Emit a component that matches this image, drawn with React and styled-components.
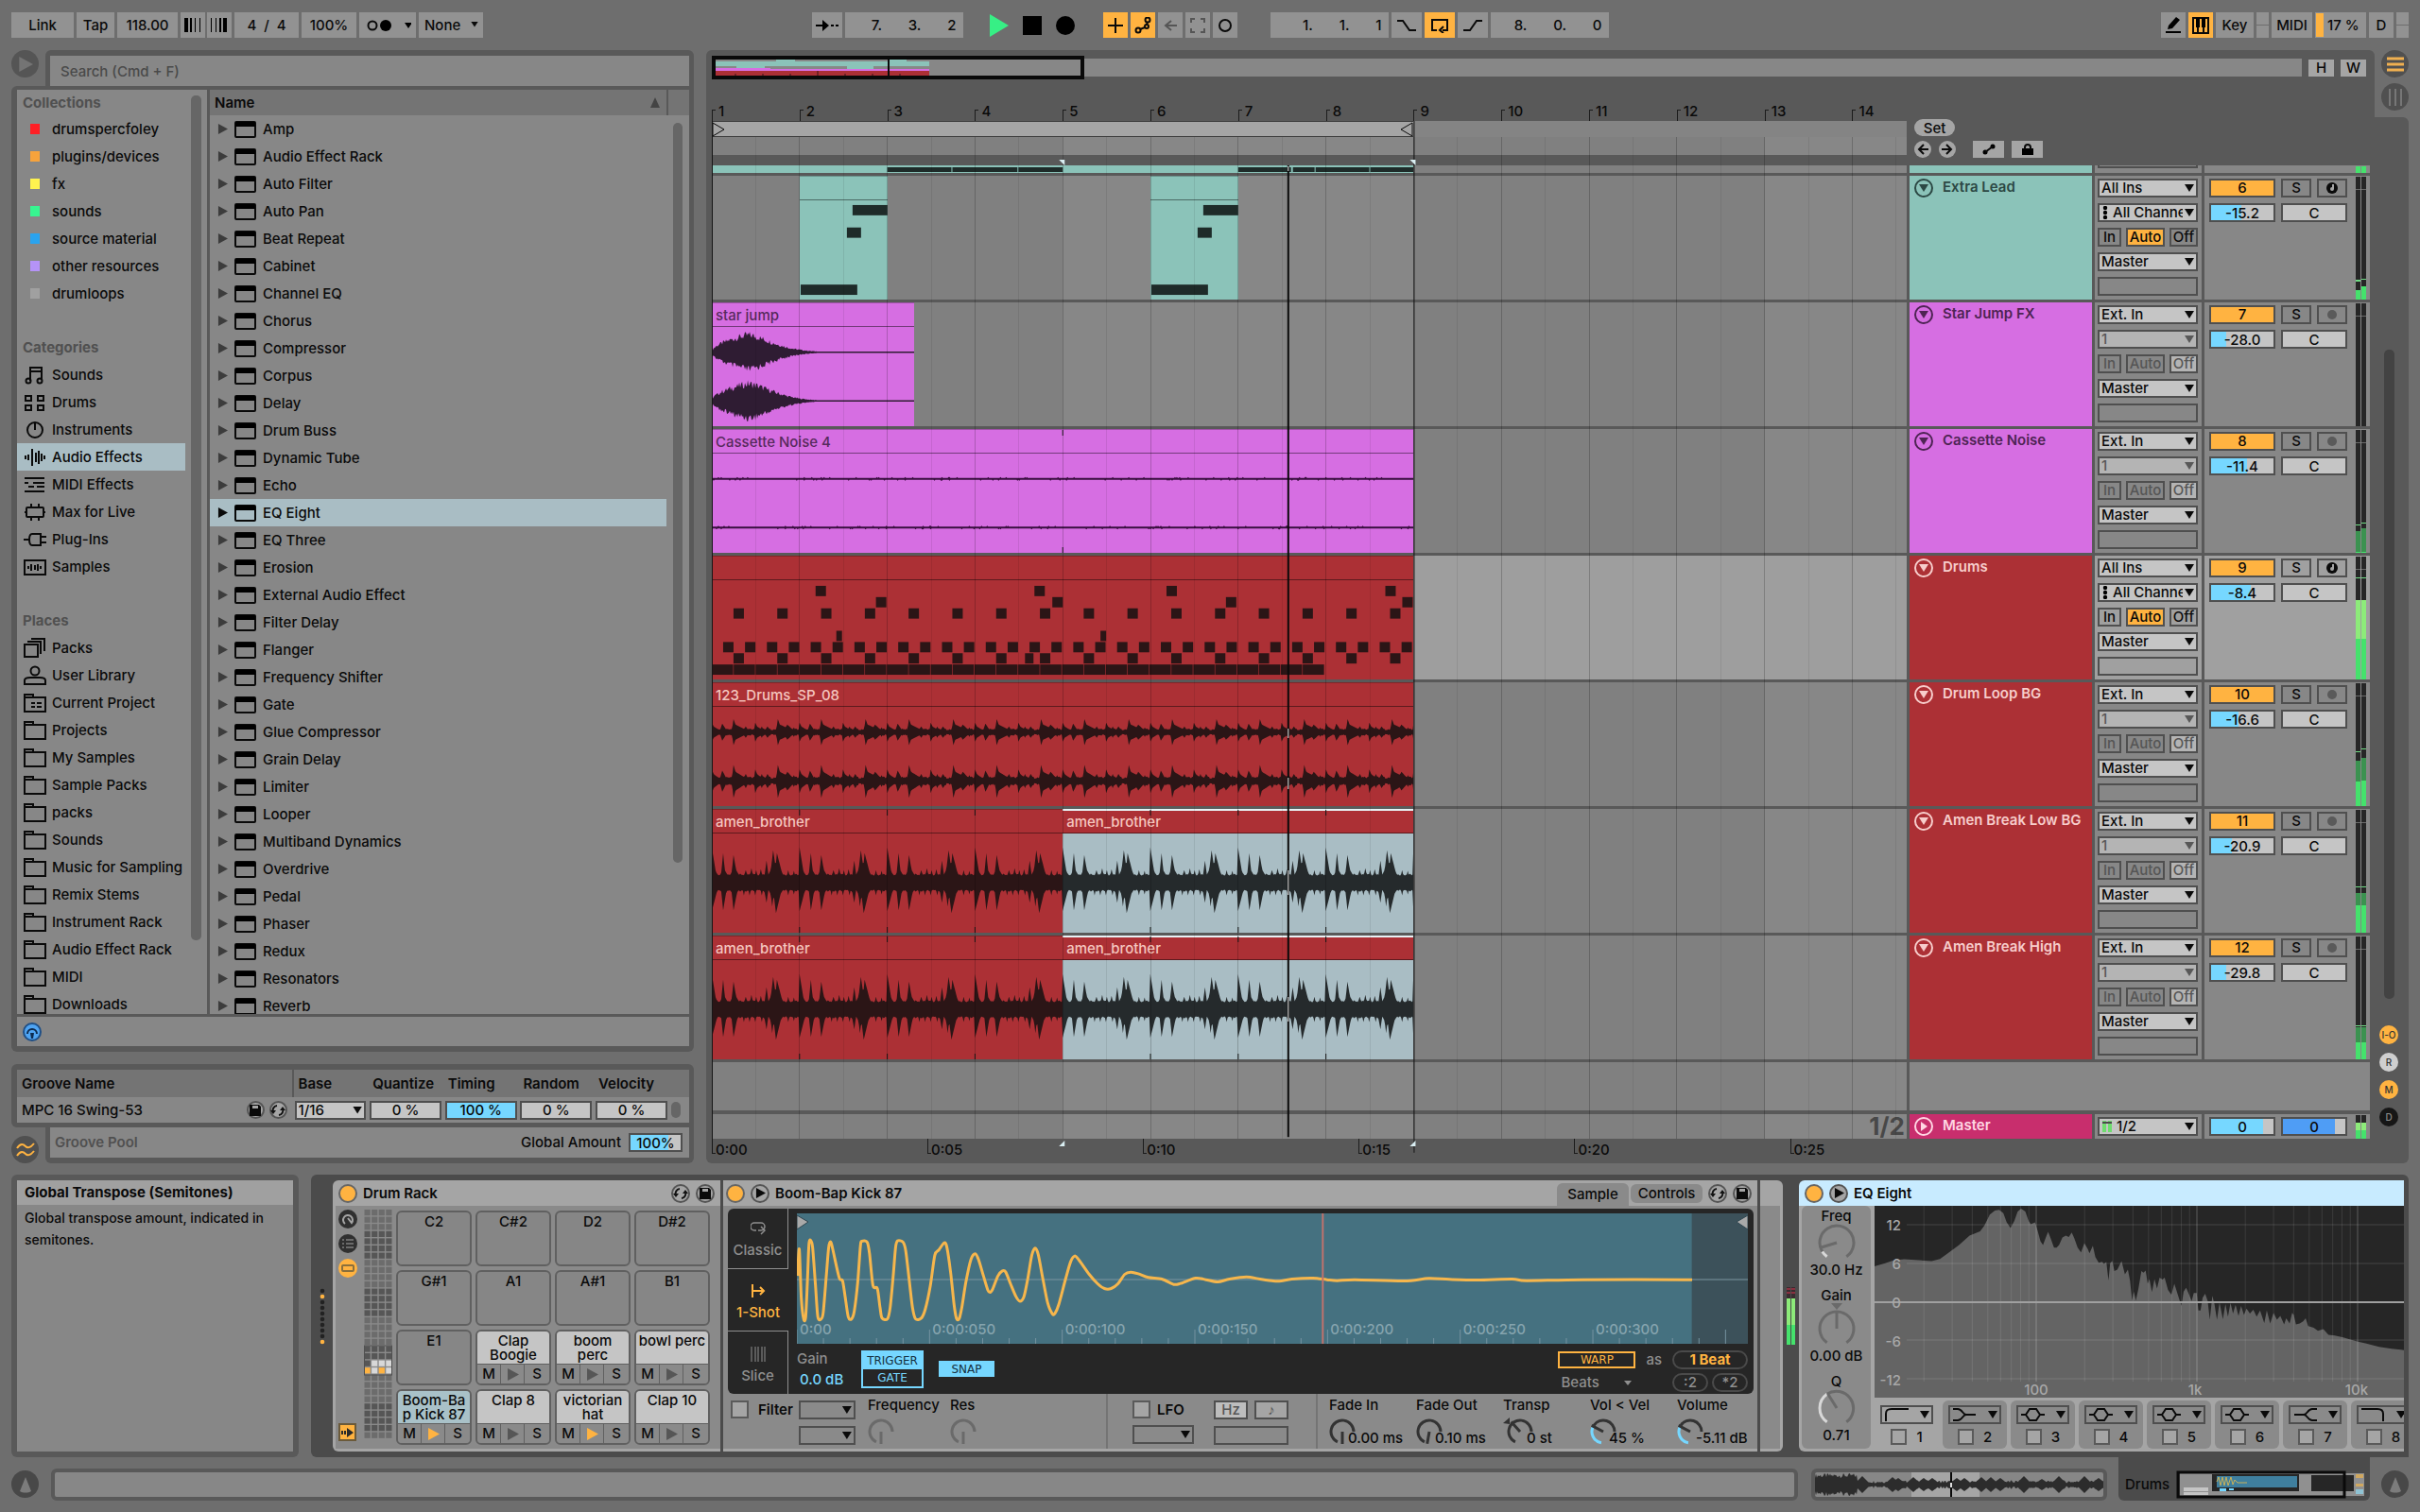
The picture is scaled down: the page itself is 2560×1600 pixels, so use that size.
import React from 'react';
import styled, { createGlobalStyle, css } from 'styled-components';

const C = {
  page: '#6e6e6e',
  frame: '#595959',
  dark: '#4b4b4b',
  surface: '#878787',
  head: '#747474',
  light: '#a5a5a5',
  field: '#c5c5c5',
  line: '#4f4f4f',
  orange: '#ffb341',
  cyan: '#76d7ff',
  select: '#a9bdc4',
  display: '#262626',
  teal: '#8bc3b9',
  magenta: '#d66ee2',
  red: '#ac3035',
};

const GlobalStyle = createGlobalStyle`
  *, *::before, *::after { box-sizing: border-box; }
  body {
    margin: 0;
    background: ${C.page};
    color: #0a0a0a;
    font-family: Inter, "Liberation Sans", sans-serif;
    font-size: 15px;
    font-weight: 500;
    line-height: 18px;
  }
  button, input, select { font: inherit; color: inherit; margin: 0; border: 0; padding: 0; border-radius: 0; }
  ul { list-style: none; margin: 0; padding: 0; }
  h2, h3, p { margin: 0; font-size: inherit; }
  svg { display: block; flex: none; }
`;

/* ---------- geometry helpers ---------- */

const noise = (n) => {
  const v = Math.sin(n * 12.9898) * 43758.5453;
  return v - Math.floor(v);
};

const polar = (cx, cy, r, deg) => {
  const a = ((deg - 90) * Math.PI) / 180;
  return [(cx + r * Math.cos(a)).toFixed(2), (cy + r * Math.sin(a)).toFixed(2)];
};

const arc = (cx, cy, r, from, to) => {
  const [x1, y1] = polar(cx, cy, r, from);
  const [x2, y2] = polar(cx, cy, r, to);
  return `M${x1} ${y1}A${r} ${r} 0 ${to - from > 180 ? 1 : 0} 1 ${x2} ${y2}`;
};

const smooth = (pts) => {
  let d = `M${pts[0][0]} ${pts[0][1]}`;
  for (let i = 0; i < pts.length - 1; i += 1) {
    const p0 = pts[i - 1] || pts[i];
    const p1 = pts[i];
    const p2 = pts[i + 1];
    const p3 = pts[i + 2] || p2;
    const k = 7;
    d += `C${p1[0] + (p2[0] - p0[0]) / k} ${p1[1] + (p2[1] - p0[1]) / k} ${p2[0] - (p3[0] - p1[0]) / k} ${p2[1] - (p3[1] - p1[1]) / k} ${p2[0]} ${p2[1]}`;
  }
  return d;
};

const envelopePath = (width, center, up, down) => {
  let top = '';
  let bottom = '';
  for (let x = 0; x <= width; x += 1) {
    top += `${x ? 'L' : 'M'}${x} ${(center - up(x)).toFixed(1)}`;
    bottom = `L${x} ${(center + down(x)).toFixed(1)}${bottom}`;
  }
  return `${top}${bottom}Z`;
};

const hits = (list, base, period) => (x) => {
  const t = x % period;
  return list.reduce((max, [at, height, rise = 3, fall = 3]) => {
    const d = t - at;
    const v = d < 0 ? height * (1 + d / rise) : height * (1 - d / fall);
    return Math.max(max, v);
  }, base + noise(Math.floor(t)) * 2);
};

/* ---------- shared controls ---------- */

const Round = styled.button`
  display: flex;
  flex: none;
  align-items: center;
  justify-content: center;
  width: ${(p) => p.$size}px;
  height: ${(p) => p.$size}px;
  border-radius: 50%;
  background: ${(p) => p.$bg || 'transparent'};
  border: ${(p) => (p.$ring ? `2px solid ${p.$ring}` : '0')};
  font-size: 10px;
  line-height: 12px;
  color: ${(p) => p.$ink || 'inherit'};
`;

const SelectWrap = styled.span`
  position: relative;
  display: flex;
  flex: none;
  width: ${(p) => (p.$w ? `${p.$w}px` : 'auto')};
  height: ${(p) => p.$h || 20}px;
  background: ${(p) => p.$bg || C.field};
  border: ${(p) => (p.$plain ? '0' : `2px solid ${C.line}`)};
  color: ${(p) => (p.disabled ? '#585858' : 'inherit')};
  &::after {
    content: '';
    position: absolute;
    right: ${(p) => (p.$plain ? 5 : 2)}px;
    top: 50%;
    width: ${(p) => (p.$plain ? 8 : 10)}px;
    height: ${(p) => (p.$plain ? 6 : 8)}px;
    margin-top: -4px;
    background: currentColor;
    clip-path: polygon(0 0, 100% 0, 50% 100%);
    pointer-events: none;
  }
  svg { align-self: center; margin: 0 3px; }
  select {
    flex: 1;
    width: 10px;
    min-width: 0;
    appearance: none;
    background: transparent;
    padding: 0 14px 0 ${(p) => (p.$plain ? 6 : 2)}px;
    line-height: 16px;
    opacity: 1;
    outline: 0;
    text-overflow: clip;
  }
`;

const Select = ({ label, value, icon, disabled, ...rest }) => (
  <SelectWrap disabled={disabled} {...rest}>
    {icon}
    <select aria-label={label} defaultValue={value} disabled={disabled}>
      <option value={value}>{value}</option>
    </select>
  </SelectWrap>
);

const Value = styled.input.attrs({ type: 'text' })`
  width: ${(p) => p.$w}px;
  min-width: 0;
  height: 20px;
  border: 2px solid ${C.line};
  text-align: center;
  line-height: 16px;
  background: ${(p) =>
    `linear-gradient(to right, ${p.$tint || C.cyan} ${p.$fill || 0}%, ${p.$bg || C.field} ${p.$fill || 0}%)`};
`;

const Toggle = styled.button`
  width: ${(p) => p.$w}px;
  height: ${(p) => p.$h || 20}px;
  display: flex;
  align-items: center;
  justify-content: center;
  border: 2px solid ${C.line};
  line-height: 16px;
  background: ${(p) => (p.$on ? C.orange : p.$bg || 'transparent')};
  color: ${(p) => (p.$dim ? '#555' : 'inherit')};
`;

const Check = styled.input.attrs({ type: 'checkbox' })`
  appearance: none;
  flex: none;
  width: ${(p) => p.$size || 19}px;
  height: ${(p) => p.$size || 19}px;
  border: 2px solid #5a5a5a;
  background: ${C.light};
`;

const Thumb = styled.span`
  display: block;
  flex: none;
  width: ${(p) => p.$w || 11}px;
  height: ${(p) => p.$len};
  border-radius: 5px;
  background: ${(p) => p.$bg || '#666'};
`;

/* ---------- icons ---------- */

const Stroke = ({ w = 24, h = 22, children, sw = 2, color = 'currentColor' }) => (
  <svg width={w} height={h} viewBox={`0 0 ${w} ${h}`} fill="none" stroke={color} strokeWidth={sw} aria-hidden="true">
    {children}
  </svg>
);

const Folder = ({ children }) => (
  <Stroke>
    <path d="M1 20V2h9v3h13v15zM1 5h9" />
    {children}
  </Stroke>
);

const sidebarIcons = {
  sounds: (
    <Stroke>
      <path d="M7 17V3h12v13M7 7h12" />
      <circle cx="5" cy="17" r="2.5" />
      <circle cx="17" cy="17" r="2.5" />
    </Stroke>
  ),
  drums: (
    <Stroke>
      <path d="M2 4h6v5H2zM15 4h6v5h-6zM2 14h6v5H2zM15 14h6v5h-6z" />
    </Stroke>
  ),
  instruments: (
    <Stroke>
      <circle cx="12" cy="11" r="8" />
      <path d="M12 3v8" />
    </Stroke>
  ),
  audio: (
    <Stroke>
      <path d="M2 9v4M5 8v6M9 2v18M13 6v10M16 4v14M19 7v8M22 9v4" />
    </Stroke>
  ),
  midi: (
    <Stroke>
      <path d="M1 4h21M1 9h4M10 9h12M5 13h6M14 13h8M1 18h21" />
    </Stroke>
  ),
  max: (
    <Stroke>
      <rect x="3" y="6" width="18" height="10" rx="1" />
      <path d="M8 6V2M16 6V2M8 20v-4M16 20v-4M1 11h2M21 11h2" />
    </Stroke>
  ),
  plug: (
    <Stroke>
      <path d="M0 11h6M18 5H9C7 5 6 8 6 11s1 6 3 6h9zM18 8h6M18 14h6" />
    </Stroke>
  ),
  samples: (
    <Stroke>
      <path d="M1 4h22v15H1z" />
      <path d="M5 10v3M8 8v7M12 9v5M15 8v7M18 10v3" />
    </Stroke>
  ),
  packs: (
    <Stroke>
      <path d="M1 7h14v13H1zM4 4h14v13M8 1h14v13" />
    </Stroke>
  ),
  user: (
    <Stroke>
      <circle cx="12" cy="6" r="4.5" />
      <path d="M1 20v-4c0-2 3-3 6-3h10c3 0 6 1 6 3v4z" />
    </Stroke>
  ),
  project: (
    <Folder>
      <path d="M8 11h4M14 11h5M8 15h4M14 15h5" />
    </Folder>
  ),
  folder: <Folder />,
};

const HotSwap = () => (
  <svg width="16" height="16" viewBox="0 0 16 16" aria-hidden="true">
    <path d="M3 10a5 5 0 0 1 4-7M13 6a5 5 0 0 1-4 7" fill="none" stroke="#111" strokeWidth="2" />
    <path d="M0 8h6l-3 4zM10 8h6l-3-4z" fill="#111" />
  </svg>
);

const Save = () => (
  <svg width="12" height="12" viewBox="0 0 12 12" aria-hidden="true">
    <path d="M0 0h10l2 2v10H0z" fill="#0a0a0a" />
    <path d="M3 1h6v3H3z" fill={C.light} />
  </svg>
);

const PlayGlyph = ({ size = 12, color = '#0a0a0a' }) => (
  <svg width={size} height={size} viewBox="0 0 12 12" aria-hidden="true">
    <path d="M1 0l11 6-11 6z" fill={color} />
  </svg>
);

/* ---------- top bar ---------- */

const TopBar = styled.header`
  display: grid;
  grid-template-columns: 1fr auto 1fr;
  height: 27px;
`;

const Group = styled.div`
  display: flex;
  gap: ${(p) => p.$gap || 3}px;
  justify-content: ${(p) => (p.$end ? 'flex-end' : 'flex-start')};
`;

const topCell = css`
  width: ${(p) => p.$w}px;
  height: 27px;
  background: ${(p) => (p.$on ? C.orange : '#929292')};
`;

const TopButton = styled.button`
  ${topCell}
  display: flex;
  align-items: center;
  justify-content: center;
`;

const TopInput = styled.input.attrs({ type: 'text' })`
  ${topCell}
  text-align: ${(p) => p.$align || 'center'};
  padding: 0 ${(p) => (p.$align ? 7 : 0)}px;
`;

const Transport = styled.button`
  width: 32px;
  height: 27px;
  display: flex;
  align-items: center;
  justify-content: center;
  background: transparent;
`;

const Leds = styled.span`
  display: grid;
  width: 13px;
  gap: 1px;
  &::before, &::after { content: ''; background: #929292; }
`;

const Gap = styled.span`
  width: ${(p) => p.$w}px;
`;

const CpuMeter = styled.span`
  display: flex;
  align-items: center;
  gap: 4px;
  width: 54px;
  height: 27px;
  padding: 1px;
  background: #929292;
  &::before { content: ''; width: 8px; height: 25px; background: ${C.orange}; }
`;

const bars = (xs) => (
  <svg width="20" height="15" viewBox="0 0 20 15" aria-hidden="true">
    {xs.map(([x, w]) => (
      <rect key={x} x={x} width={w} height="15" />
    ))}
  </svg>
);

const Top = () => (
  <TopBar>
    <Group>
      <TopButton $w={66}>Link</TopButton>
      <TopButton $w={40}>Tap</TopButton>
      <TopInput $w={64} aria-label="Tempo" defaultValue="118.00" />
      <Group $gap={2}>
        <TopButton $w={26} aria-label="Nudge down">{bars([[1, 4], [7, 2], [12, 1], [17, 1]])}</TopButton>
        <TopButton $w={26} aria-label="Nudge up">{bars([[1, 1], [6, 1], [10, 2], [14, 4]])}</TopButton>
      </Group>
      <TopInput $w={68} aria-label="Time signature" defaultValue="4  /  4" />
      <TopInput $w={58} aria-label="Groove amount" defaultValue="100%" />
      <TopButton $w={60} aria-label="Metronome">
        <svg width="50" height="16" viewBox="0 0 50 16">
          <circle cx="9" cy="8" r="4.5" fill="none" stroke="#0a0a0a" strokeWidth="2" />
          <circle cx="23" cy="8" r="6" />
          <path d="M43 5h8l-4 6z" />
        </svg>
      </TopButton>
      <Select label="Quantization" value="None" $w={68} $h={27} $bg="#929292" $plain />
    </Group>
    <Group>
      <TopButton $w={32} aria-label="Follow">
        <svg width="24" height="14" viewBox="0 0 24 14">
          <path d="M0 6h7V1l7 6-7 6V8H0zM16 6h3v2h-3zM21 6h3v2h-3z" />
        </svg>
      </TopButton>
      <TopInput $w={125} $align="right" aria-label="Position" defaultValue="7.       3.       2" />
      <Gap $w={16} />
      <Transport aria-label="Play">
        <svg width="20" height="24" viewBox="0 0 20 24"><path d="M0 0l20 12L0 24z" fill="#37ef85" /></svg>
      </Transport>
      <Transport aria-label="Stop">
        <svg width="20" height="20"><rect width="20" height="20" /></svg>
      </Transport>
      <Transport aria-label="Record">
        <svg width="20" height="20"><circle cx="10" cy="10" r="10" /></svg>
      </Transport>
      <Gap $w={18} />
      <TopButton $w={26} $on aria-label="Overdub">
        <Stroke w={16} h={16}><path d="M8 0v16M0 8h16" /></Stroke>
      </TopButton>
      <TopButton $w={26} $on aria-label="Automation arm">
        <Stroke w={18} h={18}>
          <circle cx="4" cy="14" r="2.5" /><circle cx="13" cy="10" r="2" /><circle cx="14" cy="3" r="2.5" />
          <path d="M6 13l5-2M13 8l1-3" />
        </Stroke>
      </TopButton>
      <TopButton $w={26} aria-label="Re-enable automation">
        <Stroke w={14} h={14} color="#555"><path d="M14 7H3M8 2L2 7l6 5" /></Stroke>
      </TopButton>
      <TopButton $w={26} aria-label="Capture">
        <Stroke w={16} h={16} color="#555"><path d="M1 5V1h4M11 1h4v4M15 11v4h-4M5 15H1v-4" /></Stroke>
      </TopButton>
      <TopButton $w={26} aria-label="Session record">
        <Stroke w={16} h={16}><circle cx="8" cy="8" r="6" /></Stroke>
      </TopButton>
      <Gap $w={29} />
      <TopInput $w={125} $align="right" aria-label="Loop start" defaultValue="1.       1.       1" />
      <TopButton $w={32} aria-label="Punch in">
        <Stroke w={20} h={14}><path d="M0 2h6l7 10h7" /></Stroke>
      </TopButton>
      <TopButton $w={32} $on aria-label="Loop">
        <Stroke w={20} h={16}><path d="M7 13H2V2h16v11h-5M14 9l-4 4 4 3" /></Stroke>
      </TopButton>
      <TopButton $w={32} aria-label="Punch out">
        <Stroke w={20} h={14}><path d="M0 12h7l7-10h6" /></Stroke>
      </TopButton>
      <TopInput $w={125} $align="right" aria-label="Loop length" defaultValue="8.       0.       0" />
    </Group>
    <Group $end>
      <TopButton $w={26} aria-label="Draw mode">
        <svg width="18" height="18" viewBox="0 0 18 18"><path d="M1 15h16v2H1zM3 13l1-4 8-9 4 3-8 9z" /></svg>
      </TopButton>
      <TopButton $w={26} $on aria-label="Computer MIDI keyboard">
        <svg width="18" height="18" viewBox="0 0 18 18">
          <path d="M1 1h16v16H1zM6 10v7M12 10v7" fill="none" stroke="#0a0a0a" strokeWidth="2" />
          <path d="M4 1h4v10H4zM10 1h4v10h-4z" />
        </svg>
      </TopButton>
      <TopButton $w={40}>Key</TopButton>
      <Leds />
      <TopButton $w={43}>MIDI</TopButton>
      <CpuMeter>17 %</CpuMeter>
      <TopButton $w={26}>D</TopButton>
      <Leds />
    </Group>
  </TopBar>
);

/* ---------- browser ---------- */

const Notch = styled.div`
  display: flex;
  justify-content: space-between;
`;

const SearchFrame = styled.div`
  width: calc(100% - 36px);
  padding: 6px 5px 0;
  border-radius: 6px 6px 0 0;
  background: ${C.frame};
`;

const Search = styled.input`
  display: block;
  width: 100%;
  height: 32px;
  padding: 0 11px;
  background: ${C.surface};
  outline: 0;
  &::placeholder { color: #4a4a4a; opacity: 1; }
`;

const BrowserBody = styled.div`
  display: flex;
  flex-direction: column;
  flex: 1;
  gap: 3px;
  min-height: 0;
  padding: 4px 5px 6px 6px;
  border-radius: 6px 0 6px 6px;
  background: ${C.frame};
`;

const BrowserColumns = styled.div`
  display: flex;
  flex: 1;
  gap: 3px;
  min-height: 0;
`;

const Sidebar = styled.nav`
  display: flex;
  justify-content: space-between;
  width: 201px;
  overflow: hidden;
  background: ${C.surface};
`;

const SidebarList = styled.div`
  width: 178px;
`;

const Section = styled.section`
  & + & { margin-top: 28px; }
  h3 {
    height: 29px;
    padding-left: 6px;
    font-weight: 700;
    color: #505050;
    line-height: 29px;
  }
  &:first-child h3 { height: 27px; line-height: 27px; }
`;

const SideItem = styled.button`
  display: flex;
  align-items: center;
  gap: 6px;
  width: 100%;
  height: 29px;
  padding-left: 7px;
  white-space: nowrap;
  background: ${(p) => (p.$on ? C.select : 'transparent')};
`;

const Swatch = styled.span`
  flex: none;
  width: 24px;
  height: 11px;
  background: ${(p) => p.$c};
  background-clip: content-box;
  padding: 0 7px;
`;

const SideGutter = styled.div`
  width: 17px;
  padding-top: 6px;
`;

const ListPane = styled.div`
  display: flex;
  flex-direction: column;
  flex: 1;
  min-width: 0;
  background: ${C.surface};
`;

const ListHead = styled.div`
  display: flex;
  flex: none;
  align-items: center;
  height: 27px;
  background: ${C.head};
  font-weight: 600;
  span { flex: 1; padding-left: 5px; }
  svg { margin-right: 7px; }
  &::after { content: ''; align-self: stretch; width: 24px; border-left: 2px solid ${C.frame}; }
`;

const ListBody = styled.div`
  display: flex;
  flex: 1;
  min-height: 0;
  overflow: hidden;
  ul { flex: 1; }
`;

const ListRow = styled.button`
  display: grid;
  grid-template-columns: 18px 30px 1fr;
  align-items: center;
  width: 100%;
  height: 29px;
  padding-left: 8px;
  text-align: left;
  background: ${(p) => (p.$on ? C.select : 'transparent')};
`;

const ListGutter = styled.div`
  width: 24px;
  padding: 8px 7px 0;
`;

const BrowserFoot = styled.div`
  display: flex;
  align-items: center;
  height: 31px;
  padding-left: 6px;
  background: ${C.surface};
`;

const collections = [
  ['drumspercfoley', '#ff1f25'], ['plugins/devices', '#f7a33c'], ['fx', '#fff34f'], ['sounds', '#37f590'],
  ['source material', '#2aa3ee'], ['other resources', '#b593f7'], ['drumloops', '#a0a0a0'],
];
const categories = [
  ['Sounds', 'sounds'], ['Drums', 'drums'], ['Instruments', 'instruments'], ['Audio Effects', 'audio'],
  ['MIDI Effects', 'midi'], ['Max for Live', 'max'], ['Plug-Ins', 'plug'], ['Samples', 'samples'],
];
const places = [
  ['Packs', 'packs'], ['User Library', 'user'], ['Current Project', 'project'], ['Projects'], ['My Samples'],
  ['Sample Packs'], ['packs'], ['Sounds'], ['Music for Sampling'], ['Remix Stems'], ['Instrument Rack'],
  ['Audio Effect Rack'], ['MIDI'], ['Downloads'],
];
const devices = [
  'Amp', 'Audio Effect Rack', 'Auto Filter', 'Auto Pan', 'Beat Repeat', 'Cabinet', 'Channel EQ', 'Chorus',
  'Compressor', 'Corpus', 'Delay', 'Drum Buss', 'Dynamic Tube', 'Echo', 'EQ Eight', 'EQ Three', 'Erosion',
  'External Audio Effect', 'Filter Delay', 'Flanger', 'Frequency Shifter', 'Gate', 'Glue Compressor',
  'Grain Delay', 'Limiter', 'Looper', 'Multiband Dynamics', 'Overdrive', 'Pedal', 'Phaser', 'Redux',
  'Resonators', 'Reverb',
];

const BrowserWrap = styled.section`
  display: flex;
  flex-direction: column;
  flex: 1;
  min-height: 0;
`;

const Browser = () => (
  <BrowserWrap>
    <Notch>
      <Round $size={29} $bg="#555" aria-label="Hide browser">
        <PlayGlyph size={16} color="#747474" />
      </Round>
      <SearchFrame>
        <Search type="text" aria-label="Search" placeholder="Search (Cmd + F)" />
      </SearchFrame>
    </Notch>
    <BrowserBody>
      <BrowserColumns>
        <Sidebar>
          <SidebarList>
            <Section>
              <h3>Collections</h3>
              {collections.map(([name, color]) => (
                <SideItem key={name}><Swatch $c={color} />{name}</SideItem>
              ))}
            </Section>
            <Section>
              <h3>Categories</h3>
              {categories.map(([name, icon]) => (
                <SideItem key={name} $on={name === 'Audio Effects'}>{sidebarIcons[icon]}{name}</SideItem>
              ))}
            </Section>
            <Section>
              <h3>Places</h3>
              {places.map(([name, icon]) => (
                <SideItem key={name}>{sidebarIcons[icon || 'folder']}{name}</SideItem>
              ))}
            </Section>
          </SidebarList>
          <SideGutter><Thumb $len="92%" /></SideGutter>
        </Sidebar>
        <ListPane>
          <ListHead>
            <span>Name</span>
            <svg width="10" height="11" viewBox="0 0 10 11"><path d="M5 0l5 11H0z" fill="#444" /></svg>
          </ListHead>
          <ListBody>
            <ul>
              {devices.map((name) => (
                <li key={name}>
                  <ListRow $on={name === 'EQ Eight'}>
                    <PlayGlyph size={11} color={name === 'EQ Eight' ? '#0a0a0a' : '#3c3c3c'} />
                    <svg width="23" height="18" viewBox="0 0 23 18">
                      <rect x="1" y="1" width="21" height="16" rx="1" fill="none" stroke="#0a0a0a" strokeWidth="2" />
                      <path d="M1 1h21v5H1z" />
                    </svg>
                    {name}
                  </ListRow>
                </li>
              ))}
            </ul>
            <ListGutter><Thumb $w={10} $len="83%" /></ListGutter>
          </ListBody>
        </ListPane>
      </BrowserColumns>
      <BrowserFoot>
        <Round $size={20} $bg="#4fa4f2" $ring="#1f4f86" aria-label="Preview">
          <svg width="14" height="14" viewBox="0 0 14 14">
            <path d="M2 9a5 5 0 1 1 10 0" fill="none" stroke="#0d2b50" strokeWidth="2" />
            <path d="M5 8h4l-1 6H6z" fill="#0d2b50" />
          </svg>
        </Round>
      </BrowserFoot>
    </BrowserBody>
  </BrowserWrap>
);

/* ---------- groove pool ---------- */

const GrooveFrame = styled.div`
  padding: 6px 5px 5px 6px;
  border-radius: 6px 6px 0 6px;
  background: ${C.frame};
`;

const GrooveTable = styled.table`
  width: 100%;
  table-layout: fixed;
  border-collapse: collapse;
  background: ${C.surface};
  th {
    height: 29px;
    padding: 0 0 0 5px;
    text-align: left;
    font-weight: 600;
    background: ${C.head};
  }
  th:first-child { border-right: 2px solid ${C.frame}; }
  td { height: 27px; padding: 0 2px; }
  td:first-child { padding-left: 5px; }
  td ${Value} { display: block; }
`;

const GrooveName = styled.div`
  display: flex;
  align-items: center;
  gap: 5px;
  padding-right: 4px;
  span { flex: 1; }
`;

const PoolFrame = styled.div`
  width: calc(100% - 36px);
  padding: 0 5px 6px;
  border-radius: 0 0 6px 6px;
  background: ${C.frame};
`;

const Pool = styled.div`
  display: flex;
  align-items: center;
  gap: 8px;
  height: 32px;
  padding: 0 7px 0 5px;
  background: ${C.surface};
  h2 { flex: 1; font-weight: 600; color: #505050; }
`;

const PoolNotch = styled(Notch)`
  align-items: flex-end;
`;

const grooveValues = [['Quantize', '0 %', 0], ['Timing', '100 %', 100], ['Random', '0 %', 0], ['Velocity', '0 %', 0]];

const Groove = () => (
  <section>
    <GrooveFrame>
      <GrooveTable>
        <colgroup>
          <col style={{ width: '41%' }} />
          <col /><col /><col /><col /><col />
          <col style={{ width: '3%' }} />
        </colgroup>
        <thead>
          <tr>
            <th>Groove Name</th>
            <th>Base</th>
            {grooveValues.map(([name]) => <th key={name}>{name}</th>)}
            <th aria-label="Scroll" />
          </tr>
        </thead>
        <tbody>
          <tr>
            <td>
              <GrooveName>
                <span>MPC 16 Swing-53</span>
                <Round $size={19} $bg={C.light} $ring="#555" aria-label="Save groove"><Save /></Round>
                <Round $size={19} $bg={C.light} $ring="#555" aria-label="Hot-swap groove"><HotSwap /></Round>
              </GrooveName>
            </td>
            <td><Select label="Base" value="1/16" /></td>
            {grooveValues.map(([name, value, fill]) => (
              <td key={name}><Value aria-label={name} defaultValue={value} $fill={fill} $w={76} /></td>
            ))}
            <td><Thumb $w={10} $len="17px" /></td>
          </tr>
        </tbody>
      </GrooveTable>
    </GrooveFrame>
    <PoolNotch>
      <Round $size={29} $bg="#505050" aria-label="Hide groove pool">
        <Stroke w={20} h={16} color={C.orange}>
          <path d="M1 6c4-6 7-4 9-2s5 2 9-3M1 14c4-6 7-4 9-2s5 2 9-3" />
        </Stroke>
      </Round>
      <PoolFrame>
        <Pool>
          <h2>Groove Pool</h2>
          <label htmlFor="global-amount">Global Amount</label>
          <Value id="global-amount" defaultValue="100%" $fill={76} $w={57} />
        </Pool>
      </PoolFrame>
    </PoolNotch>
  </section>
);

/* ---------- arrangement ---------- */

const BARS = 13.62;
const pct = (barsCount) => `${(barsCount / BARS) * 100}%`;

const Arrange = styled.section`
  display: flex;
  flex: 1;
  min-width: 0;
`;

const ArrangePanel = styled.div`
  display: flex;
  flex-direction: column;
  flex: 1;
  min-width: 0;
  padding: 6px 5px 0 6px;
  border-radius: 6px 6px 0 6px;
  background: ${C.frame};
`;

const OverviewRow = styled.div`
  display: flex;
  align-items: center;
  gap: 7px;
  height: 25px;
  padding-right: 4px;
`;

const Overview = styled.div`
  position: relative;
  flex: 1;
  height: 19px;
  background: ${C.surface};
`;

const OverviewWindow = styled.div`
  position: absolute;
  left: 0;
  top: -3px;
  width: 394px;
  height: 25px;
  border: 4px solid #0a0a0a;
`;

const SmallButton = styled.button`
  display: flex;
  align-items: center;
  justify-content: center;
  width: ${(p) => p.$w}px;
  height: 18px;
  background: ${C.light};
`;

const Body = styled.div`
  display: flex;
  flex: 1;
  gap: 3px;
`;

const Timeline = styled.div`
  position: relative;
  display: flex;
  flex-direction: column;
  flex: 1;
  min-width: 0;
`;

const Ruler = styled.div`
  position: relative;
  height: ${(p) => p.$h}px;
  overflow: hidden;
`;

const RulerMark = styled.span`
  position: absolute;
  ${(p) => (p.$below ? 'top: 0; padding-top: 3px;' : 'bottom: 0; padding-bottom: 1px;')}
  padding-left: ${(p) => (p.$below ? 4 : 7)}px;
  &::before {
    content: '';
    position: absolute;
    left: 0;
    ${(p) => (p.$below ? 'top: 0; height: 16px; border-bottom: 1px solid #1c1c1c;' : 'bottom: 0; height: 12px; border-top: 1px solid #1c1c1c;')}
    width: 4px;
    border-left: 1px solid #1c1c1c;
  }
`;

const LoopRow = styled.div`
  display: flex;
  height: 17px;
  background: #848484;
`;

const LoopBrace = styled.button`
  display: flex;
  justify-content: space-between;
  align-items: center;
  height: 17px;
  border: solid #3c3c3c;
  border-width: 1px 0;
  background: ${C.light};
`;

const laneFill = css`
  background: linear-gradient(
    to right,
    #808080 ${pct(4)}, #878787 ${pct(4)} ${pct(8)}, #808080 ${pct(8)} ${pct(12)}, #878787 ${pct(12)}
  );
`;

const Lane = styled.div`
  position: relative;
  flex: ${(p) => (p.$grow ? '1' : 'none')};
  height: ${(p) => (p.$h ? `${p.$h}px` : 'auto')};
  ${laneFill}
  ${(p) => p.$active && 'background: #9e9e9e;'}
`;

const LaneGap = styled.div`
  height: ${(p) => p.$h || 3}px;
`;

const ClipBox = styled.button`
  position: absolute;
  top: 0;
  bottom: 0;
  display: flex;
  flex-direction: column;
  text-align: left;
  background: ${(p) => (p.$selected ? C.select : p.$c)};
  color: ${(p) => p.$ink};
  border-top: ${(p) => (p.$selected ? '2px solid #e8f2f5' : '1px solid rgba(0, 0, 0, 0.25)')};
`;

const ClipTitle = styled.span`
  flex: none;
  width: 100%;
  height: ${(p) => (p.$selected ? 24 : 25)}px;
  padding: ${(p) => (p.$selected ? 3 : 4)}px 0 0 4px;
  background: ${(p) => p.$c};
  border-bottom: 1px solid rgba(0, 0, 0, 0.45);
`;

const ClipArt = styled.svg`
  flex: 1;
  width: 100%;
  min-height: 0;
`;

const Overlay = styled.svg`
  position: absolute;
  left: 0;
  top: ${(p) => p.$top}px;
  width: 100%;
  height: calc(100% - ${(p) => p.$top + 26}px);
  overflow: visible;
  pointer-events: none;
`;

const GridNumber = styled.span`
  position: absolute;
  right: 2px;
  top: 0;
  font-size: 26px;
  line-height: 26px;
  font-weight: 700;
  color: #484848;
`;

const Clip = ({ start, length, color, ink, title, selected, box, children }) => (
  <ClipBox
    $c={color}
    $ink={ink}
    $selected={selected}
    aria-label={title || 'MIDI clip'}
    style={{ left: pct(start), width: pct(length) }}
  >
    <ClipTitle $c={color} $selected={selected}>{title}</ClipTitle>
    <ClipArt viewBox={`0 0 ${box[0]} ${box[1]}`} preserveAspectRatio="none">{children}</ClipArt>
  </ClipBox>
);

const amenBody = [[0, 17, 3, 12], [12, 16, 5, 9], [23, 18, 5, 10], [65, 18, 9, 10], [69, 17, 6, 13]];
const amenUp = hits([
  ...amenBody,
  [0, 37, 1, 6], [12, 31], [23, 29, 3, 5], [36, 13, 4, 4], [42, 15], [47, 13], [52, 14],
  [58, 23], [65, 34, 4, 5], [69, 31, 3, 8], [81, 13], [87, 12], [93, 37, 1, 1],
], 7, 93);
const amenDown = hits([
  ...amenBody,
  [0, 31, 1, 8], [12, 30, 3, 5], [23, 30, 3, 6], [34, 14], [40, 14], [46, 14], [53, 14], [58, 22, 4, 3],
  [64, 26], [68, 33, 4, 8], [81, 14], [87, 13],
], 8, 93);
const amenPath = envelopePath(372, 52, amenUp, amenDown);

const loopEnv = hits([
  [0, 10, 1, 5], [0, 7, 1, 12], [11, 9, 3, 6], [23, 14, 2, 5], [23, 9, 3, 18], [36, 6, 4, 4], [46, 10, 1, 5],
  [46, 7, 1, 12], [53, 6], [59, 6, 4, 5], [70, 14, 2, 5], [70, 9, 3, 20], [80, 8, 5, 9], [87, 5],
], 2, 93);
const loopTop = envelopePath(744, 27, loopEnv, loopEnv);
const loopBottom = envelopePath(744, 79, (x) => loopEnv(x) * 1.2, (x) => loopEnv(x) * 1.3);

const swell = (seed) => (x) => {
  const rise = x < 38 ? Math.sqrt(x / 38) * 17 : 17 * Math.exp(-(((x - 38) / 36) ** 1.6));
  return Math.max(0.7, rise * (0.82 + noise(x + seed) * 0.5));
};
const swellTop = envelopePath(214, 27, swell(1), swell(40));
const swellBottom = envelopePath(214, 79, swell(90), swell(170));

const hiss = (seed) => (x) => (noise(x + seed) > 0.93 ? 1.9 : 0.9);
const hissTop = envelopePath(744, 27, hiss(3), hiss(11));
const hissBottom = envelopePath(744, 79, hiss(23), hiss(31));

const eighths = Array.from({ length: 16 }, (_, i) => 23 + i * 46.4);
const drumNotes = [
  ...[110, 342, 482, 714].map((x) => [x, 6, 11]),
  ...[174, 361, 545, 732].map((x) => [x, 18, 11]),
  ...eighths.map((x) => [x, 30, 11]),
  ...[132, 412].map((x) => [x, 54, 6]),
  ...Array.from({ length: 32 }, (_, i) => [12 + i * 23.2, 66, 11]),
  ...eighths.map((x) => [x, 78, 11]),
  [332, 78, 9],
  ...Array.from({ length: 28 }, (_, i) => [i * 23.2, 90, 22.6]),
];

const leadNotes = (
  <g fill="#1e2b29">
    <rect x="56" y="5" width="37" height="11" />
    <rect x="50" y="29" width="15" height="11" />
    <rect x="1" y="90" width="60" height="11" />
  </g>
);

const amenClip = { length: 4, color: C.red, ink: '#f5c6bf', title: 'amen_brother', box: [372, 106] };

const lanes = [
  {
    id: 'lead',
    clips: [
      { start: 1, length: 1, color: C.teal, box: [93, 106], art: leadNotes },
      { start: 5, length: 1, color: C.teal, box: [93, 106], art: leadNotes },
    ],
  },
  {
    id: 'star',
    clips: [
      {
        start: 0, length: 2.31, color: C.magenta, ink: '#562a5c', title: 'star jump', box: [214, 106],
        art: <path d={`${swellTop}${swellBottom}`} fill="#2f1c33" />,
      },
    ],
  },
  {
    id: 'cassette',
    clips: [
      {
        start: 0, length: 8, color: C.magenta, ink: '#562a5c', title: 'Cassette Noise 4', box: [744, 106],
        art: <path d={`${hissTop}${hissBottom}`} fill="#3a0f40" />,
      },
    ],
  },
  {
    id: 'drums',
    active: true,
    clips: [
      {
        start: 0, length: 8, color: C.red, box: [744, 106],
        art: drumNotes.map(([x, y, w]) => <rect key={`${x}-${y}`} x={x} y={y} width={w} height="11" fill="#2b1516" />),
      },
    ],
  },
  {
    id: 'loop',
    clips: [
      {
        start: 0, length: 8, color: C.red, ink: '#f5c6bf', title: '123_Drums_SP_08', box: [744, 106],
        art: <path d={`${loopTop}${loopBottom}`} fill="#2b1516" />,
      },
    ],
  },
  ...['low', 'high'].map((id) => ({
    id,
    clips: [
      { ...amenClip, start: 0, art: <path d={amenPath} fill="#2b1516" /> },
      { ...amenClip, start: 4, selected: true, art: <path d={amenPath} fill="#252a2c" /> },
    ],
  })),
];

const Sliver = styled.div`
  width: ${(p) => p.$w};
  height: 100%;
  background: ${C.teal};
`;

// loop marks at the top and bottom edge of a looped clip: [bar, lane top]
const loopMarks = [
  [4, 309],
  ...[711, 845].flatMap((y) => [1, 2, 3, 5, 6, 7].map((bar) => [bar, y])),
];

const Grid = () => (
  <Overlay $top={61} aria-hidden="true">
    {Array.from({ length: 27 }, (_, i) => i + 1).map((i) => (
      <line
        key={i}
        x1={pct(i / 2)}
        x2={pct(i / 2)}
        y1="0"
        y2="100%"
        stroke="#000"
        strokeOpacity={i % 2 ? 0.08 : 0.2}
        strokeWidth="1"
        shapeRendering="crispEdges"
      />
    ))}
    {loopMarks.map(([bar, y]) => (
      <svg key={`${bar}-${y}`} x={pct(bar)} y={y} overflow="visible">
        <path d="M0 1v6M0 125v6" stroke="#161616" strokeWidth="1" />
      </svg>
    ))}
    {[0, 8].map((bar) => (
      <rect key={bar} x={pct(bar)} y="-17" width="1" height="103%" fill="#161616" />
    ))}
    {[4, 8].map((bar) => (
      <svg key={bar} x={pct(bar)} y="0" overflow="visible">
        <path d="M-4 24h6v6z" fill="#d9eef2" />
      </svg>
    ))}
    {[4, 8].map((bar) => (
      <svg key={bar} x={pct(bar)} y="100%" overflow="visible">
        <path d="M-4 8h6V2z" fill="#d9eef2" />
      </svg>
    ))}
    <svg x={pct(6.56)} y="0" height="100%" width="4" overflow="visible">
      <rect x="0" y="30" width="2" height="97%" fill="#0a0a0a" />
      <path d="M1 31v5M1 626v10M1 678v12M1 776v26M1 910v26" stroke="#e8e8e8" strokeWidth="1" />
    </svg>
  </Overlay>
);

const TimelineView = () => (
  <Timeline>
    <Ruler $h={44}>
      {Array.from({ length: 14 }, (_, i) => (
        <RulerMark key={i} style={{ left: pct(i) }}>{i + 1}</RulerMark>
      ))}
    </Ruler>
    <LoopRow>
      <LoopBrace aria-label="Loop brace" style={{ width: pct(8) }}>
        <Stroke w={14} h={16} sw={1}><path d="M1 1l12 7-12 7z" /></Stroke>
        <Stroke w={14} h={16} sw={1}><path d="M13 1L1 8l12 7z" /></Stroke>
      </LoopBrace>
    </LoopRow>
    <Lane $h={19} />
    <LaneGap $h={11} />
    <Lane $h={8}>
      <Sliver $w={pct(8)}>
        <svg width="100%" height="8" viewBox="0 0 744 8" preserveAspectRatio="none">
          <path d="M186 2h68v5h-68zM255 2h69v5h-69zM325 2h47v5h-47zM558 2h56v5h-56zM616 2h23v5h-23zM640 2h57v5h-57zM698 2h46v5h-46z" fill="#1e2b29" />
        </svg>
      </Sliver>
    </Lane>
    <LaneGap />
    {lanes.map((lane) => (
      <React.Fragment key={lane.id}>
        <Lane $h={131} $active={lane.active}>
          {lane.clips.map(({ art, ...clip }) => <Clip key={clip.start} {...clip}>{art}</Clip>)}
        </Lane>
        <LaneGap />
      </React.Fragment>
    ))}
    <Lane $grow />
    <LaneGap $h={4} />
    <Lane $h={26}><GridNumber>1/2</GridNumber></Lane>
    <Ruler $h={26}>
      {Array.from({ length: 6 }, (_, i) => (
        <RulerMark key={i} $below style={{ left: pct(i * 2.458) }}>{`0:${String(i * 5).padStart(2, '0')}`}</RulerMark>
      ))}
    </Ruler>
    <Grid />
  </Timeline>
);

/* ---------- track headers ---------- */

const Headers = styled.div`
  display: flex;
  flex-direction: column;
  flex: none;
  width: 487px;
`;

const HeaderTools = styled.div`
  display: flex;
  flex-direction: column;
  align-items: flex-start;
  gap: 5px;
  height: 91px;
  padding: 42px 0 0 5px;
`;

const Pill = styled.button`
  width: 43px;
  height: 18px;
  border-radius: 9px;
  line-height: 17px;
  background: ${C.light};
`;

const ToolRow = styled.div`
  display: flex;
  gap: 8px;
  ${Round} + ${SmallButton} { margin-left: 10px; }
`;

const Row = styled.div`
  display: grid;
  flex: none;
  grid-template-columns: 193px 113px 1fr;
  gap: 3px;
  height: ${(p) => p.$h}px;
  margin-bottom: ${(p) => (p.$last ? 26 : 3)}px;
`;

const NameCell = styled.div`
  display: flex;
  gap: 10px;
  padding: 3px 0 0 5px;
  overflow: hidden;
  white-space: nowrap;
  background: ${(p) => p.$c};
  color: ${(p) => p.$ink};
  font-weight: 600;
`;

const Routing = styled.div`
  display: flex;
  flex-direction: column;
  gap: 6px;
  padding: 3px 4px 0 3px;
  overflow: hidden;
  background: ${(p) => (p.$active ? '#a0a0a0' : C.surface)};
`;

const Monitor = styled.div`
  display: flex;
  justify-content: space-between;
`;

const EmptySlot = styled.div`
  height: 20px;
  border: 2px solid ${C.line};
`;

const Mixer = styled.div`
  display: flex;
  justify-content: space-between;
  overflow: hidden;
  padding: 0 4px 0 5px;
  background: ${(p) => (p.$active ? '#a0a0a0' : C.surface)};
`;

const MixerControls = styled.div`
  display: grid;
  grid-template-columns: 70px 70px;
  gap: 6px;
  align-content: start;
  padding-top: 3px;
`;

const Pair = styled.div`
  display: flex;
  justify-content: space-between;
`;

const Meters = styled.div`
  display: flex;
  gap: 1px;
  padding-top: 1px;
`;

const MeterBar = styled.span`
  width: 5px;
  background:
    linear-gradient(to top, transparent 89%, #6a6a6a 89% 90%, transparent 90%),
    linear-gradient(
      to top,
      #45e26c ${(p) => p.$low}%,
      ${(p) => p.$tone} ${(p) => p.$low}% ${(p) => p.$mid}%,
      #262626 ${(p) => p.$mid}% ${(p) => p.$peak}%,
      ${(p) => (p.$peak ? '#6fdc84' : '#262626')} ${(p) => p.$peak}% ${(p) => p.$peak + 1}%,
      #262626 ${(p) => p.$peak + 1}%
    );
`;

const StereoMeter = ({ left, right, tone = '#3b9250' }) => (
  <Meters>
    {[left, right].map(([low, mid, peak], i) => (
      <MeterBar key={i} $low={low} $mid={mid} $peak={peak} $tone={tone} />
    ))}
  </Meters>
);

const Fold = ({ ink, right }) => (
  <Round $size={20} $ring={ink} $ink={ink} aria-label="Unfold track">
    <svg width="10" height="10" viewBox="0 0 10 10">
      <path d={right ? 'M2 0l7 5-7 5z' : 'M0 1h10L5 9z'} fill="currentColor" />
    </svg>
  </Round>
);

const channelDots = (
  <svg width="6" height="14" viewBox="0 0 6 14">
    {[2, 7, 12].map((y) => <circle key={y} cx="3" cy={y} r="2.2" />)}
  </svg>
);

const tracks = [
  { n: 6, name: 'Extra Lead', c: C.teal, ink: '#2c4844', midi: true, vol: '-15.2', fill: 48, left: [8, 8, 15], right: [11, 11, 16] },
  { n: 7, name: 'Star Jump FX', c: C.magenta, ink: '#4e2454', vol: '-28.0', fill: 24, left: [0, 0, 0], right: [0, 0, 0] },
  { n: 8, name: 'Cassette Noise', c: C.magenta, ink: '#4e2454', vol: '-11.4', fill: 58, left: [1, 18, 22], right: [1, 20, 24] },
  { n: 9, name: 'Drums', c: C.red, ink: '#f7cdcb', midi: true, active: true, vol: '-8.4', fill: 64, left: [33, 65, 82], right: [33, 65, 82], tone: '#8deb7a' },
  { n: 10, name: 'Drum Loop BG', c: C.red, ink: '#f7cdcb', vol: '-16.6', fill: 44, left: [20, 37, 44], right: [21, 39, 46] },
  { n: 11, name: 'Amen Break Low BG', c: C.red, ink: '#f7cdcb', vol: '-20.9', fill: 34, left: [22, 32, 37], right: [22, 32, 37] },
  { n: 12, name: 'Amen Break High', c: C.red, ink: '#f7cdcb', vol: '-29.8', fill: 24, left: [14, 26, 27], right: [14, 26, 27] },
];

const TrackRow = ({ track: t }) => (
  <Row $h={131}>
    <NameCell $c={t.c} $ink={t.ink}><Fold ink={t.ink} />{t.name}</NameCell>
    <Routing $active={t.active}>
      <Select label={`${t.name} input`} value={t.midi ? 'All Ins' : 'Ext. In'} />
      {t.midi
        ? <Select label={`${t.name} channel`} value="All Channels" icon={channelDots} />
        : <Select label={`${t.name} channel`} value="1" disabled $bg="#b4b4b4" />}
      <Monitor>
        <Toggle $w={25} $dim={!t.midi}>In</Toggle>
        <Toggle $w={41} $on={t.midi} $dim={!t.midi}>Auto</Toggle>
        <Toggle $w={30} $bg={t.midi ? 'transparent' : '#b4b4b4'} $dim={!t.midi}>Off</Toggle>
      </Monitor>
      <Select label={`${t.name} output`} value="Master" />
      <EmptySlot />
    </Routing>
    <Mixer $active={t.active}>
      <MixerControls>
        <Toggle $w={70} $on>{t.n}</Toggle>
        <Pair>
          <Toggle $w={32} aria-label="Solo">S</Toggle>
          <Toggle $w={32} aria-label="Arm">
            <svg width="12" height="12" viewBox="0 0 12 12">
              <circle cx="6" cy="6" r={t.midi ? 6 : 5} fill={t.midi ? '#0a0a0a' : '#5a5a5a'} />
              {t.midi && <path d="M6 2h2v5a2 2 0 1 1-2-2z" fill={C.light} />}
            </svg>
          </Toggle>
        </Pair>
        <Value aria-label={`${t.name} volume`} defaultValue={t.vol} $fill={t.fill} $w={70} />
        <Value aria-label={`${t.name} pan`} defaultValue="C" $w={70} />
      </MixerControls>
      <StereoMeter left={t.left} right={t.right} tone={t.tone} />
    </Mixer>
  </Row>
);

const EmptyArea = styled.div`
  flex: 1;
  margin-bottom: 4px;
  background: ${C.surface};
`;

const SliverRouting = styled.div`
  padding: 0 4px 2px 3px;
  background: ${C.surface};
  &::before { content: ''; display: block; height: 3px; border: solid ${C.line}; border-width: 0 2px 2px; }
`;

const HeaderView = () => (
  <Headers>
    <HeaderTools>
      <Pill>Set</Pill>
      <ToolRow>
        <Round $size={18} $bg={C.light} aria-label="Previous locator">
          <Stroke w={12} h={12}><path d="M12 6H2M7 1L2 6l5 5" /></Stroke>
        </Round>
        <Round $size={18} $bg={C.light} aria-label="Next locator">
          <Stroke w={12} h={12}><path d="M0 6h10M5 1l5 5-5 5" /></Stroke>
        </Round>
        <SmallButton $w={33} aria-label="Automation mode">
          <svg width="14" height="12" viewBox="0 0 14 12">
            <circle cx="3" cy="9" r="2.5" /><circle cx="11" cy="3" r="2.5" />
            <path d="M3 9l8-6" stroke="#0a0a0a" strokeWidth="2" />
          </svg>
        </SmallButton>
        <SmallButton $w={33} aria-label="Lock envelopes">
          <svg width="12" height="12" viewBox="0 0 12 12">
            <path d="M0 5h12v7H0z" /><path d="M3 6V4a3 3 0 0 1 6 0v2" fill="none" stroke="#0a0a0a" strokeWidth="2" />
          </svg>
        </SmallButton>
      </ToolRow>
    </HeaderTools>
    <Row $h={8}>
      <NameCell $c={C.teal} />
      <SliverRouting />
      <Mixer><span /><StereoMeter left={[100, 100, 100]} right={[100, 100, 100]} /></Mixer>
    </Row>
    {tracks.map((t) => <TrackRow key={t.n} track={t} />)}
    <EmptyArea />
    <Row $h={26} $last>
      <NameCell $c="#c82e6d" $ink="#ffd6e3"><Fold ink="#ffd6e3" right />Master</NameCell>
      <Routing>
        <Select
          label="Master output"
          value="1/2"
          icon={<svg width="10" height="12"><path d="M0 0h4v12H0zM6 0h4v12H6z" fill="#6fdc6f" /><path d="M0 1h10v2H0z" fill="#4b4b4b" /></svg>}
        />
      </Routing>
      <Mixer>
        <MixerControls>
          <Value aria-label="Cue volume" defaultValue="0" $fill={84} $w={70} />
          <Value aria-label="Master volume" defaultValue="0" $fill={84} $tint="#4f9df5" $w={70} />
        </MixerControls>
        <StereoMeter left={[36, 70, 80]} right={[36, 70, 80]} tone="#8deb7a" />
      </Mixer>
    </Row>
  </Headers>
);

const Rail = styled.div`
  display: flex;
  flex-direction: column;
  width: 36px;
`;

const RailTop = styled.div`
  display: flex;
  flex-direction: column;
  align-items: flex-end;
  gap: 6px;
  height: 71px;
`;

const RailBody = styled.div`
  display: flex;
  flex-direction: column;
  align-items: center;
  gap: 9px;
  flex: 1;
  padding: 246px 6px 39px 0;
  border-radius: 0 6px 6px 0;
  background: ${C.frame};
`;

const RailTrack = styled.div`
  flex: 1;
  margin-bottom: 19px;
`;

const Arrangement = () => (
  <Arrange>
    <ArrangePanel>
      <OverviewRow>
        <Overview>
          <svg width="230" height="19" viewBox="0 0 230 19">
            <path d="M0 3h230v5H0zM68 1h20v2H68zM188 1h18v2h-18zM143 8h28v3h-28zM26 8h30v2H26z" fill={C.teal} />
            <path d="M0 10h62v3H0zM0 11h230v2H0z" fill={C.magenta} />
            <path d="M0 13h230v6H0z" fill={C.red} />
            <path d="M25 16v3M54 16v3M83 16v3M112 13v6M141 16v3M170 16v3M199 16v3" stroke="#3a1516" />
            <path d="M187 0v19" stroke="#0a0a0a" strokeWidth="2" />
          </svg>
          <OverviewWindow />
        </Overview>
        <SmallButton $w={27}>H</SmallButton>
        <SmallButton $w={27}>W</SmallButton>
      </OverviewRow>
      <Body>
        <TimelineView />
        <HeaderView />
      </Body>
    </ArrangePanel>
    <Rail>
      <RailTop>
        <Round $size={29} $bg="#505050" aria-label="Arrangement view">
          <Stroke w={18} h={18} sw={3} color="#f0b050"><path d="M0 3h18M0 9h18M0 15h18" /></Stroke>
        </Round>
        <Round $size={29} $bg="#505050" aria-label="Session view">
          <Stroke w={18} h={18} color="#777"><path d="M3 0v18M9 0v18M15 0v18" /></Stroke>
        </Round>
      </RailTop>
      <RailBody>
        <RailTrack><Thumb $bg="#434343" $len="100%" /></RailTrack>
        <Round $size={20} $bg={C.orange} $ink="#333">I-O</Round>
        <Round $size={20} $bg="#cfcfcf" $ink="#333">R</Round>
        <Round $size={20} $bg={C.orange} $ink="#333">M</Round>
        <Round $size={20} $bg="#161616" $ink="#8a8a8a">D</Round>
      </RailBody>
    </Rail>
  </Arrange>
);

/* ---------- info view and device chain ---------- */

const Lower = styled.div`
  display: flex;
  gap: 13px;
  height: 299px;
  margin-top: 12px;
`;

const Info = styled.aside`
  width: 304px;
  padding: 6px;
  border-radius: 6px;
  background: ${C.frame};
`;

const InfoBody = styled.div`
  height: 100%;
  background: ${C.surface};
  font-size: 14px;
  h2 { height: 26px; padding-left: 8px; font-size: 15px; font-weight: 700; line-height: 26px; background: #a0a0a0; }
  p { padding: 2px 8px; line-height: 23px; }
`;

const Chain = styled.section`
  display: flex;
  flex: 1;
  min-width: 0;
  padding: 6px 5px 6px 0;
  border-radius: 6px 6px 0 6px;
  background: ${C.dark};
`;

const ChainDots = styled.div`
  display: flex;
  align-items: center;
  justify-content: center;
  width: 23px;
`;

const Device = styled.article`
  display: flex;
  flex-direction: column;
  flex: ${(p) => (p.$w ? 'none' : '1')};
  width: ${(p) => (p.$w ? `${p.$w}px` : 'auto')};
  min-width: 0;
  margin-right: ${(p) => p.$gap || 0}px;
  padding: 0 0 3px ${(p) => p.$left || 0}px;
  border-radius: ${(p) => p.$corners || '0'};
  overflow: hidden;
  background: linear-gradient(to bottom, ${(p) => p.$top || C.light} 27px, ${C.light} 27px);
`;

const DeviceHead = styled.div`
  display: flex;
  flex: none;
  align-items: center;
  gap: 6px;
  height: 27px;
  padding: 0 6px 0 3px;
  h2 { flex: 1; font-weight: 600; }
`;

const OnButton = () => <Round $size={20} $bg={C.orange} $ring="#666" aria-label="Device on" />;

const HeadIcons = () => (
  <>
    <Round $size={20} $bg={C.light} $ring="#555" aria-label="Hot-swap preset"><HotSwap /></Round>
    <Round $size={20} $bg={C.light} $ring="#555" aria-label="Save preset"><Save /></Round>
  </>
);

const RackBody = styled.div`
  display: flex;
  flex: 1;
  padding: 4px 11px 4px 3px;
  background: #8a8a8a;
`;

const RackTools = styled.div`
  display: flex;
  flex-direction: column;
  gap: 6px;
  width: 27px;
  padding-bottom: 4px;
`;

const ChainButton = styled.button`
  display: flex;
  align-items: center;
  justify-content: center;
  width: 19px;
  height: 19px;
  margin-top: auto;
  border: 2px solid #6b5a3a;
  background: ${C.orange};
`;

const Pads = styled.div`
  display: grid;
  flex: 1;
  grid-template-columns: repeat(4, 1fr);
  grid-auto-rows: 59px;
  gap: 4px;
  padding: 1px 0 0 4px;
`;

const Pad = styled.div`
  display: flex;
  flex-direction: column;
  border: 2px solid #606060;
  border-radius: 6px;
  overflow: hidden;
  background: #868686;
  > span {
    flex: 1;
    padding: 2px 0 0;
    text-align: center;
    line-height: 15px;
    white-space: pre-line;
    background: ${(p) => p.$bg || 'transparent'};
  }
`;

const PadButtons = styled.div`
  display: grid;
  grid-template-columns: 24px 1fr 27px;
  height: 21px;
  border-top: 1px solid #606060;
  background: #8a8a8a;
  button {
    display: flex;
    align-items: center;
    justify-content: center;
    background: transparent;
  }
  button + button { border-left: 1px solid #606060; }
`;

const pads = [
  ['C2'], ['C#2'], ['D2'], ['D#2'], ['G#1'], ['A1'], ['A#1'], ['B1'], ['E1'],
  ['Clap\nBoogie', C.field], ['boom\nperc', C.field], ['bowl perc', C.field],
  ['Boom-Ba\np Kick 87', '#a9c1c8', true], ['Clap 8', C.field], ['victorian\nhat', C.field, true], ['Clap 10', C.field],
];

const PadMap = () => (
  <svg width="30" height="243" viewBox="0 0 30 243" aria-hidden="true">
    {Array.from({ length: 128 }, (_, i) => {
      const row = Math.floor(i / 4);
      const col = i % 4;
      const dark = (row >= 3 && row <= 6) || (row >= 11 && row <= 14) || (row >= 19 && row <= 22) || (row >= 27 && row <= 30);
      let fill = dark ? '#565656' : '#6c6c6c';
      if (row === 21 && col > 0) fill = '#d8d8d8';
      if (row === 22) fill = col % 2 ? '#d8d8d8' : C.orange;
      return <rect key={i} x={col * 7.6 + 0.5} y={row * 7.6} width="6.2" height="6.2" fill={fill} />;
    })}
    <rect x="0.5" y="144" width="29" height="31" fill="none" stroke="#505050" />
  </svg>
);

const DrumRack = () => (
  <Device $w={410} $gap={3} $left={3} $corners="6px 0 0 6px">
    <DeviceHead>
      <OnButton />
      <h2>Drum Rack</h2>
      <HeadIcons />
    </DeviceHead>
    <RackBody>
      <RackTools>
        <Round $size={20} $bg="#303030" aria-label="Macros">
          <Stroke w={14} h={14} color={C.light}><path d="M4 12a5 5 0 1 1 7-1L7 6" /></Stroke>
        </Round>
        <Round $size={20} $bg="#303030" aria-label="Chain list">
          <Stroke w={12} h={10} color={C.light} sw={1}><path d="M0 1h2M4 1h8M0 5h2M4 5h8M0 9h2M4 9h8" /></Stroke>
        </Round>
        <Round $size={20} $bg={C.orange} aria-label="Devices">
          <Stroke w={14} h={8} color="#8a6f3c"><rect x="1" y="1" width="12" height="6" rx="1" /></Stroke>
        </Round>
        <ChainButton aria-label="Auto select">
          <svg width="13" height="10" viewBox="0 0 13 10"><path d="M0 3h2v4H0zM3 3h2v4H3zM6 0l7 5-7 5z" fill="#2a2a2a" /></svg>
        </ChainButton>
      </RackTools>
      <PadMap />
      <Pads>
        {pads.map(([name, bg, playing]) => (
          <Pad key={name} $bg={bg}>
            <span>{name}</span>
            {bg && (
              <PadButtons>
                <button type="button" aria-label={`Mute ${name}`}>M</button>
                <button type="button" aria-label={`Preview ${name}`}>
                  <PlayGlyph size={13} color={playing ? C.orange : '#565656'} />
                </button>
                <button type="button" aria-label={`Solo ${name}`}>S</button>
              </PadButtons>
            )}
          </Pad>
        ))}
      </Pads>
    </RackBody>
  </Device>
);

const SimplerBody = styled.div`
  display: flex;
  flex-direction: column;
  flex: 1;
  padding: 3px 4px 0 5px;
  background: #8a8a8a;
`;

const Display = styled.div`
  display: flex;
  height: 196px;
  border-radius: 6px;
  background: ${C.display};
  color: #8f8f8f;
`;

const Modes = styled.div`
  display: grid;
  grid-template-rows: 64px 65px 1fr;
  width: 64px;
`;

const Mode = styled.button`
  display: flex;
  flex-direction: column;
  align-items: center;
  justify-content: flex-end;
  gap: 6px;
  padding-bottom: 10px;
  background: transparent;
  color: ${(p) => (p.$on ? C.orange : '#8f8f8f')};
  ${(p) => !p.$on && 'border-right: 1px solid #8f8f8f;'}
  &:first-child { border-bottom: 1px solid #8f8f8f; }
  &:last-child { border-top: 1px solid #8f8f8f; }
`;

const SampleView = styled.div`
  display: flex;
  flex-direction: column;
  flex: 1;
  min-width: 0;
  padding: 5px 6px 0 9px;
`;

const Wave = styled.svg`
  width: 100%;
  height: 138px;
  background: #3c515a;
  text { fill: #86a4ae; font-size: 15px; }
`;

const SampleControls = styled.div`
  display: flex;
  align-items: flex-start;
  padding-top: 7px;
`;

const GainField = styled.label`
  display: grid;
  gap: 4px;
  width: 68px;
  input { width: 60px; padding-left: 3px; background: transparent; color: ${C.cyan}; line-height: 18px; }
`;

const techFont = css`
  font-family: "DejaVu Sans", sans-serif;
  font-size: 12px;
  line-height: 14px;
`;

const TriggerGate = styled.div`
  display: grid;
  width: 66px;
  margin-right: 16px;
  border: 2px solid ${C.cyan};
  button { ${techFont} height: 18px; background: ${C.display}; color: ${C.cyan}; }
  button:first-child { background: ${C.cyan}; color: #143040; }
`;

const Snap = styled.button`
  ${techFont}
  width: 59px;
  height: 17px;
  margin: 11px auto 0 0;
  background: ${C.cyan};
  color: #143040;
`;

const Warping = styled.div`
  display: grid;
  grid-template-columns: 82px auto 80px;
  gap: 4px 11px;
  align-items: center;
`;

const WarpButton = styled.button`
  ${techFont}
  height: 18px;
  border: 2px solid ${C.orange};
  background: transparent;
  color: ${C.orange};
`;

const DarkPill = styled.button`
  height: 20px;
  flex: 1;
  border: 2px solid #4a4a4a;
  border-radius: 10px;
  line-height: 14px;
  background: transparent;
  color: ${(p) => (p.$hot ? C.orange : '#8f8f8f')};
  font-weight: ${(p) => (p.$hot ? 700 : 500)};
`;

const PillPair = styled.div`
  display: flex;
  gap: 4px;
`;

const kick = [
  [122, 330], [127, 245], [133, 400], [140, 466], [146, 460], [151, 350], [156, 226], [163, 222], [167, 245], [175, 360],
  [182, 460], [192, 466], [198, 445], [207, 330], [214, 240], [220, 222], [226, 245], [245, 335], [255, 345],
  [262, 390], [272, 460], [282, 466], [290, 440], [300, 350], [308, 235], [313, 220], [328, 223], [335, 260],
  [345, 360], [358, 370], [366, 430], [372, 464], [388, 466], [396, 430], [405, 330], [412, 240], [418, 219],
  [434, 223], [442, 250], [452, 340], [462, 430], [471, 466], [488, 464], [500, 435], [515, 360], [528, 265],
  [540, 248], [556, 225], [564, 240], [575, 320], [585, 420], [592, 464], [600, 466], [608, 430], [620, 350],
  [635, 278], [648, 260], [658, 280], [672, 330], [685, 375], [692, 382], [700, 370], [715, 330], [728, 314],
  [738, 318], [752, 355], [768, 395], [780, 410], [792, 395], [803, 340], [815, 265], [825, 242], [834, 262],
  [848, 340], [862, 415], [876, 450], [884, 448], [895, 420], [915, 340], [930, 285], [942, 267], [955, 280],
  [985, 325], [1010, 355], [1030, 370], [1050, 370], [1070, 355], [1090, 325], [1108, 318], [1130, 323],
  [1160, 335], [1200, 340], [1235, 357], [1255, 354], [1300, 337], [1330, 342], [1365, 349], [1400, 340],
  [1450, 333], [1490, 340], [1530, 346], [1553, 346], [1585, 340], [1647, 337], [1688, 342], [1719, 345],
  [1771, 342], [1916, 346], [1989, 338], [2051, 341], [2134, 343], [2237, 340], [2279, 345], [2444, 342], [2769, 342],
];

const SampleWave = () => (
  <Wave role="img" aria-label="Sample waveform">
    <rect width="94.1%" height="100%" fill="#457180" />
    <line x1="0" x2="100%" y1="70" y2="70" stroke="#7d97a0" strokeWidth="1" />
    {Array.from({ length: 36 }, (_, i) => (
      <line
        key={i}
        x1={`${(i * 2.79).toFixed(2)}%`}
        x2={`${(i * 2.79).toFixed(2)}%`}
        y1={i % 5 ? 132 : 123}
        y2="138"
        stroke="#7593a0"
      />
    ))}
    {['0:00', '0:00:050', '0:00:100', '0:00:150', '0:00:200', '0:00:250', '0:00:300'].map((t, i) => (
      <text key={t} x={`${(i * 13.95 + 0.3).toFixed(2)}%`} y="128">{t}</text>
    ))}
    <svg viewBox="120 132 2814 413" preserveAspectRatio="none">
      <path d={smooth(kick)} fill="none" stroke="#f6b64c" strokeWidth="3" vectorEffect="non-scaling-stroke" strokeLinejoin="round" />
    </svg>
    <rect x="55.2%" width="2" height="100%" fill="#c0726c" />
    <path d="M0 2l12 7-12 8z" fill="#a9a9a9" stroke="#2f4650" />
    <svg x="100%" overflow="visible"><path d="M0 2l-12 7 12 8z" fill="#a9a9a9" stroke="#2f4650" /></svg>
  </Wave>
);

const DisplaySelect = styled.span`
  display: flex;
  align-items: center;
  select { width: 70px; appearance: none; background: transparent; padding-left: 3px; }
`;

const Controls = styled.div`
  display: flex;
  flex: 1;
  margin: 0 -4px 0 -5px;
`;

const FilterSection = styled.div`
  display: flex;
  width: 407px;
  padding-left: 8px;
  border-right: 2px solid #747474;
  > label { margin-top: 7px; }
`;

const CheckLabel = styled.label`
  display: flex;
  align-items: center;
  gap: ${(p) => p.$gap || 10}px;
  height: 19px;
  font-weight: 600;
`;

const Stack = styled.div`
  display: flex;
  flex-direction: column;
  gap: 7px;
  padding-top: 7px;
  margin-left: ${(p) => p.$ml || 0}px;
`;

const LfoSection = styled.div`
  display: flex;
  flex: 1;
  max-width: 222px;
  padding-left: 26px;
  border-right: 2px solid #747474;
`;

const KnobSection = styled.div`
  display: grid;
  flex: 1;
  grid-template-columns: repeat(4, 92px) 1fr;
  padding-left: 12px;
`;

const KnobCell = styled.div`
  display: grid;
  width: ${(p) => (p.$w ? `${p.$w}px` : 'auto')};
  grid-template-columns: ${(p) => 20 + (p.$lead || 0)}px 1fr;
  grid-template-rows: 24px 32px;
  align-content: start;
  margin-left: ${(p) => p.$ml || 0}px;
  white-space: nowrap;
  > span { grid-column: 1 / -1; line-height: 24px; }
  > svg { grid-column: 1 / -1; grid-row: 2; margin-top: 1px; }
  > output { grid-column: 2; grid-row: 2; align-self: end; }
`;

const Knob = ({ angle, lit, color = '#333', offset = 0 }) => (
  <svg width={30 + offset} height="30" viewBox={`0 0 ${30 + offset} 30`} fill="none" strokeWidth="3" aria-hidden="true">
    <path d={arc(14 + offset, 15, 12, lit ? angle + 6 : 205, 450)} stroke={color} />
    {lit && <path d={arc(14 + offset, 15, 12, 190, angle)} stroke={C.cyan} />}
    <path d={`M${14 + offset} 15L${polar(14 + offset, 15, lit || offset ? 14 : 13, angle).join(' ')}`} stroke={color} />
    {offset > 0 && <path d="M0 6l7 1V0z" fill={color} />}
  </svg>
);

const Tab = styled.button`
  height: ${(p) => (p.$on ? 24 : 20)}px;
  align-self: ${(p) => (p.$on ? 'flex-end' : 'center')};
  width: 76px;
  margin-right: ${(p) => (p.$on ? -4 : 0)}px;
  border-radius: ${(p) => (p.$on ? '6px 6px 0 0' : '6px')};
  background: #8a8a8a;
`;

const Simpler = () => (
  <Device $gap={3}>
    <DeviceHead>
      <OnButton />
      <Round $size={20} $bg={C.light} $ring="#555" aria-label="Show chain"><PlayGlyph size={11} /></Round>
      <h2>Boom-Bap Kick 87</h2>
      <Tab $on>Sample</Tab>
      <Tab>Controls</Tab>
      <HeadIcons />
    </DeviceHead>
    <SimplerBody>
      <Display>
        <Modes>
          <Mode>
            <Stroke w={16} h={16}><path d="M6 10H4a3 3 0 0 1 0-8h7a4 4 0 0 1 0 8H8M11 6l4 4-4 4" strokeWidth="1.5" /></Stroke>
            Classic
          </Mode>
          <Mode $on>
            <Stroke w={16} h={16}><path d="M2 1v14M2 8h12M10 4l4 4-4 4" /></Stroke>
            1-Shot
          </Mode>
          <Mode>
            <Stroke w={16} h={16} sw={1}><path d="M1 0v16M5 0v16M8 0v16M12 0v16M15 0v16" /></Stroke>
            Slice
          </Mode>
        </Modes>
        <SampleView>
          <SampleWave />
          <SampleControls>
            <GainField>
              Gain
              <input type="text" defaultValue="0.0 dB" />
            </GainField>
            <TriggerGate>
              <button type="button">TRIGGER</button>
              <button type="button">GATE</button>
            </TriggerGate>
            <Snap>SNAP</Snap>
            <Warping>
              <WarpButton>WARP</WarpButton>
              <span>as</span>
              <DarkPill $hot>1 Beat</DarkPill>
              <DisplaySelect>
                <select aria-label="Warp mode" defaultValue="Beats"><option>Beats</option></select>
                <svg width="8" height="5"><path d="M0 0h8L4 5z" fill="#8f8f8f" /></svg>
              </DisplaySelect>
              <span />
              <PillPair><DarkPill>:2</DarkPill><DarkPill>*2</DarkPill></PillPair>
            </Warping>
          </SampleControls>
        </SampleView>
      </Display>
      <Controls>
        <FilterSection>
          <CheckLabel><Check />Filter</CheckLabel>
          <Stack $ml={6}>
            <Select label="Filter type" value="" $w={60} $bg="transparent" />
            <Select label="Filter circuit" value="" $w={60} $bg="transparent" />
          </Stack>
          <KnobCell $w={74} $ml={13}><span>Frequency</span><Knob angle={180} color="#6a6a6a" /></KnobCell>
          <KnobCell $w={74} $ml={13}><span>Res</span><Knob angle={180} color="#6a6a6a" /></KnobCell>
        </FilterSection>
        <LfoSection>
          <Stack>
            <CheckLabel $gap={7}><Check />LFO</CheckLabel>
            <Select label="LFO shape" value="" $w={65} $bg="transparent" />
          </Stack>
          <Stack $ml={21}>
            <Group $gap={7}>
              <Toggle $w={36} $bg="#bdbdbd" $dim>Hz</Toggle>
              <Toggle $w={36} $bg={C.light} $dim>♪</Toggle>
            </Group>
            <EmptySlot />
          </Stack>
        </LfoSection>
        <KnobSection>
          <KnobCell><span>Fade In</span><Knob angle={180} /><output>0.00 ms</output></KnobCell>
          <KnobCell><span>Fade Out</span><Knob angle={190} /><output>0.10 ms</output></KnobCell>
          <KnobCell $lead={5}><span>Transp</span><Knob angle={318} offset={4} /><output>0 st</output></KnobCell>
          <KnobCell><span>Vol &lt; Vel</span><Knob angle={298} lit /><output>45 %</output></KnobCell>
          <KnobCell><span>Volume</span><Knob angle={298} lit /><output>-5.11 dB</output></KnobCell>
        </KnobSection>
      </Controls>
    </SimplerBody>
  </Device>
);

const Tail = styled.div`
  width: 24px;
  padding: 27px 3px 3px 0;
  border-radius: 0 6px 6px 0;
  background: ${C.light};
  &::before { content: ''; display: block; height: 100%; background: #8a8a8a; }
`;

const ChainMeter = styled.div`
  display: flex;
  align-items: center;
  justify-content: center;
  width: 17px;
`;

/* ---------- EQ Eight ---------- */

const EqBody = styled.div`
  display: flex;
  flex: 1;
  gap: 4px;
  min-height: 0;
`;

const EqKnobs = styled.div`
  display: flex;
  flex-direction: column;
  justify-content: space-between;
  flex: none;
  width: 73px;
  padding: 2px 0 6px;
  border-radius: 6px;
  background: #8a8a8a;
`;

const EqKnobCell = styled.div`
  display: flex;
  flex-direction: column;
  align-items: center;
  line-height: 17px;
`;

const EqMain = styled.div`
  display: flex;
  flex-direction: column;
  flex: 1;
  min-width: 0;
  gap: 3px;
`;

const EqGraph = styled.svg`
  width: 100%;
  height: 203px;
  background: ${C.display};
  text { fill: #a8a8a8; font-size: 15px; }
`;

const Bands = styled.div`
  display: flex;
  gap: 4px;
  flex: 1;
  overflow: hidden;
`;

const Band = styled.div`
  display: flex;
  flex-direction: column;
  flex: none;
  align-items: center;
  gap: 5px;
  width: 68px;
  padding-top: 5px;
  border-radius: 6px;
  background: ${(p) => (p.$on ? C.light : '#8a8a8a')};
`;

const BandCheck = styled.label`
  display: flex;
  gap: 10px;
  height: 18px;
`;

const EqKnob = ({ angle, lit }) => (
  <svg width="42" height="40" viewBox="0 0 42 40" fill="none" strokeWidth="3" aria-hidden="true">
    <path d={arc(21, 20, 18, lit || 215, 505)} stroke="#6a6a6a" />
    {lit && <path d={arc(21, 20, 18, 215, lit)} stroke="#d8d8d8" />}
    <path d={`M21 20L${polar(21, 20, 18, angle).join(' ')}`} stroke="#6a6a6a" />
  </svg>
);

const spectrum = [
  [275, 330], [300, 320], [320, 311], [345, 307], [380, 310], [410, 313], [430, 306], [450, 287], [475, 262], [500, 232],
  [525, 218], [535, 200], [548, 165], [560, 152], [570, 150], [580, 160], [588, 190], [597, 208], [606, 185],
  [614, 155], [622, 146], [632, 155], [640, 185], [645, 196], [655, 190], [661, 215], [668, 250], [674, 262],
  [680, 240], [686, 220], [692, 240], [700, 270], [706, 270], [712, 262], [720, 238], [728, 232], [735, 236],
  [742, 222], [748, 240], [756, 270], [764, 285], [772, 256], [780, 275], [784, 288], [792, 264], [798, 300],
  [806, 318], [814, 315], [818, 322], [824, 316], [829, 375], [833, 320], [838, 312], [843, 345], [850, 340],
  [860, 313], [868, 355], [875, 340], [880, 375], [885, 438], [889, 410], [894, 438], [900, 400], [907, 345],
  [912, 350], [917, 343], [922, 385], [926, 370], [932, 412], [938, 370], [944, 400], [950, 366], [957, 372],
  [962, 366], [970, 405], [978, 420], [985, 385], [992, 415], [998, 440], [1002, 455], [1007, 410], [1013, 398],
  [1020, 420], [1026, 440], [1031, 415], [1038, 415], [1042, 470], [1047, 470], [1052, 430], [1058, 417],
  [1064, 440], [1069, 500], [1075, 424], [1080, 450], [1086, 500], [1092, 445], [1100, 498], [1106, 450],
  [1112, 490], [1118, 446], [1124, 480], [1130, 452], [1137, 488], [1143, 456], [1150, 485], [1156, 464],
  [1164, 480], [1172, 468], [1180, 490], [1188, 470], [1198, 510], [1204, 470], [1212, 512], [1220, 478],
  [1228, 500], [1236, 488], [1245, 515], [1250, 495], [1258, 512], [1264, 478], [1268, 485], [1273, 515],
  [1282, 512], [1290, 505], [1296, 495], [1302, 520], [1315, 525], [1325, 535], [1338, 530], [1350, 548],
  [1365, 550], [1385, 556], [1400, 562], [1420, 570], [1440, 576], [1470, 586], [1500, 592], [1531, 597],
];

const gridFreqs = [20, 30, 40, 50, 60, 70, 80, 90].flatMap((f) => [f, f * 10, f * 100]).concat([100, 1000, 10000]);
const freqX = (f) => 171 + 170 * Math.log10(f / 100);

const bell = 'M0 8h5l4-6h7l4 6h5M5 8l4 6h7l4-6';
const bandShapes = [
  'M1 15V7c0-4 2-5 6-5h18',
  'M0 2h5c5 0 5 6 9 6h10M0 14h5c5 0 5-6 9-6',
  bell, bell, bell, bell,
  'M25 2h-5c-5 0-5 6-9 6H1M25 14h-5c-5 0-5-6-9-6',
  'M0 2h17c4 0 6 2 6 5v8',
];

const EqEight = () => (
  <Device $w={640} $left={3} $top="#c8ebff" $corners="6px 0 0 6px">
    <DeviceHead>
      <OnButton />
      <Round $size={20} $bg={C.light} $ring="#555" aria-label="Show chain"><PlayGlyph size={11} /></Round>
      <h2>EQ Eight</h2>
    </DeviceHead>
    <EqBody>
      <EqKnobs>
        <EqKnobCell><span>Freq</span><EqKnob angle={253} lit={238} /><output>30.0 Hz</output></EqKnobCell>
        <EqKnobCell>
          <span>Gain</span>
          <svg width="12" height="7"><path d="M0 0h12L6 7z" fill="#6a6a6a" /></svg>
          <EqKnob angle={0} />
          <output>0.00 dB</output>
        </EqKnobCell>
        <EqKnobCell><span>Q</span><EqKnob angle={328} lit={325} /><output>0.71</output></EqKnobCell>
      </EqKnobs>
      <EqMain>
        <EqGraph role="img" aria-label="Spectrum">
          <svg width="561" height="203" viewBox="275 137 1256 611" preserveAspectRatio="none">
            <path d={`M275 748L${spectrum.map((p) => p.join(' ')).join('L')}V748Z`} fill="#646464" />
          </svg>
          {gridFreqs.map((f) => (
            <line key={f} x1={freqX(f)} x2={freqX(f)} y1="0" y2="186" stroke="#fff" strokeOpacity={[100, 1000, 10000].includes(f) ? 0.25 : 0.1} />
          ))}
          {[20, 61, 142, 183].map((y) => (
            <line key={y} x1="34" x2="100%" y1={y} y2={y} stroke="#fff" strokeOpacity="0.14" />
          ))}
          <line x1="0" x2="100%" y1="102" y2="102" stroke="#a0a0a0" strokeWidth="2" />
          {['12', '6', '0', '-6', '-12'].map((label, i) => (
            <text key={label} x="28" y={26 + i * 41} textAnchor="end">{label}</text>
          ))}
          {[['100', 171], ['1k', 339], ['10k', 510]].map(([label, x]) => (
            <text key={label} x={x} y="200" textAnchor="middle">{label}</text>
          ))}
        </EqGraph>
        <Bands>
          {bandShapes.map((shape, i) => (
            <Band key={i} $on={i === 0}>
              <SelectWrap $w={56} $h={20} $bg="transparent">
                <svg width="25" height="16" viewBox="0 0 25 16" fill="none" stroke="#0a0a0a" strokeWidth="2">
                  <path d={shape} />
                </svg>
                <select aria-label={`Band ${i + 1} filter`} />
              </SelectWrap>
              <BandCheck><Check $size={17} />{i + 1}</BandCheck>
            </Band>
          ))}
        </Bands>
      </EqMain>
    </EqBody>
  </Device>
);

const LowerView = () => (
  <Lower>
    <Info>
      <InfoBody>
        <h2>Global Transpose (Semitones)</h2>
        <p>Global transpose amount, indicated in semitones.</p>
      </InfoBody>
    </Info>
    <Chain>
      <ChainDots>
        <svg width="6" height="60" viewBox="0 0 6 60">
          {Array.from({ length: 10 }, (_, i) => (
            <circle key={i} cx="3" cy={3 + i * 6} r="2.3" fill={i === 1 || i === 9 ? C.orange : '#222'} />
          ))}
        </svg>
      </ChainDots>
      <DrumRack />
      <Simpler />
      <Tail />
      <ChainMeter>
        <svg width="9" height="61" viewBox="0 0 9 61">
          <path d="M0 0h4v12H0zM5 0h4v12H5z" fill="#3a2c30" />
          <path d="M0 1h4v2H0zM5 1h4v2H5zM0 5h4v2H0zM5 5h4v2H5z" fill="#8a3040" />
          <path d="M0 12h4v28H0zM5 12h4v28H5z" fill="#8deb7a" />
          <path d="M0 40h4v21H0zM5 40h4v21H5z" fill="#45e26c" />
        </svg>
      </ChainMeter>
      <EqEight />
    </Chain>
  </Lower>
);

/* ---------- status bar ---------- */

const Status = styled.footer`
  display: flex;
  align-items: flex-start;
  height: 46px;
`;

const StatusCircle = styled.div`
  padding: ${(p) => (p.$right ? '14px 0 0 12px' : '14px 13px 0 0')};
  margin-left: ${(p) => (p.$right ? 'auto' : 0)};
`;

const StatusField = styled.div`
  flex: 1;
  height: 34px;
  margin: 12px 14px 0 0;
  border: 4px solid ${C.frame};
  border-radius: 6px;
  background: ${C.surface};
`;

const ClipOverview = styled.div`
  width: 313px;
  height: 34px;
  margin: 12px 12px 0 0;
  border: 4px solid ${C.frame};
  border-radius: 6px;
  background: ${C.surface};
`;

const DeviceTab = styled.div`
  display: flex;
  align-items: center;
  gap: 7px;
  width: 266px;
  height: 46px;
  padding: 12px 5px 0 7px;
  border-radius: 0 0 6px 6px;
  background: ${C.dark};
`;

const statusEnv = (x) => {
  if (x < 45) return 7 + noise(x) * 5;
  const burst = [[50, 9], [82, 8], [88, 7], [104, 8], [115, 7], [124, 7], [150, 7], [158, 7], [176, 8], [186, 8], [196, 7], [221, 9], [240, 6], [258, 9], [285, 9], [300, 7]];
  return burst.reduce((m, [at, h]) => Math.max(m, h * (1 - Math.abs(x - at) / 9)), 1.5 + noise(x) * 3);
};
const statusWave = envelopePath(305, 13, statusEnv, statusEnv);

const TriangleGlyph = () => (
  <svg width="16" height="18" viewBox="0 0 16 18"><path d="M8 1l6 15c-3 2-9 2-12 0z" fill="#7c7c7c" /></svg>
);

const StatusBar = () => (
  <Status>
    <StatusCircle>
      <Round $size={29} $bg="#484848" aria-label="Info view"><TriangleGlyph /></Round>
    </StatusCircle>
    <StatusField role="status" />
    <ClipOverview>
      <svg width="100%" height="26" viewBox="0 0 305 26" preserveAspectRatio="none">
        <rect x="102" width="72" height="26" fill={C.light} />
        <path d={statusWave} fill="#2c2c2c" />
        <rect x="143" width="2" height="26" fill="#0a0a0a" />
        <rect x="143" y="11" width="2" height="5" fill="#ddd" />
      </svg>
    </ClipOverview>
    <DeviceTab>
      Drums
      <svg width="200" height="30" viewBox="0 0 200 30" aria-hidden="true">
        <path d="M4 3h195v24H4z" fill="#909090" />
        <path d="M8 18h26v4H8zM8 23h26v3H8z" fill="#c5c5c5" />
        <path d="M38 4h92v18H38z" fill="#262626" />
        <path d="M43 6h85v12H43z" fill="#3f7f9e" />
        <path d="M43 12l2-5 2 9 2-9 2 9 2-9 2 9 3-9 2 8 2-5 3 3h10" fill="none" stroke="#c8b25a" />
        <path d="M46 19h7v3h-7zM56 19h5v2h-5z" fill={C.cyan} />
        <path d="M143 5h45v17h-45z" fill="#262626" />
        <path d="M190 4h8v4h-8zM190 14h8v3h-8z" fill="#d0a860" />
        <path d="M190 20h8v5h-8z" fill="#8fc3d4" />
        <rect x="2" y="2" width="176" height="26" fill="none" stroke="#0a0a0a" strokeWidth="3" />
      </svg>
    </DeviceTab>
    <StatusCircle $right>
      <Round $size={29} $bg="#484848" aria-label="Device view"><TriangleGlyph /></Round>
    </StatusCircle>
  </Status>
);

const Page = styled.div`
  display: flex;
  flex-direction: column;
  min-height: 100vh;
  padding: 13px 12px 12px;
`;

const Main = styled.main`
  display: flex;
  flex: 1;
  gap: 13px;
  min-height: 0;
  margin-top: 13px;
`;

const Left = styled.div`
  display: flex;
  flex-direction: column;
  flex: none;
  gap: 13px;
  width: 722px;
  height: calc(100vh - 422px);
`;

export default function App() {
  return (
    <Page>
      <GlobalStyle />
      <Top />
      <Main>
        <Left>
          <Browser />
          <Groove />
        </Left>
        <Arrangement />
      </Main>
      <LowerView />
      <StatusBar />
    </Page>
  );
}
